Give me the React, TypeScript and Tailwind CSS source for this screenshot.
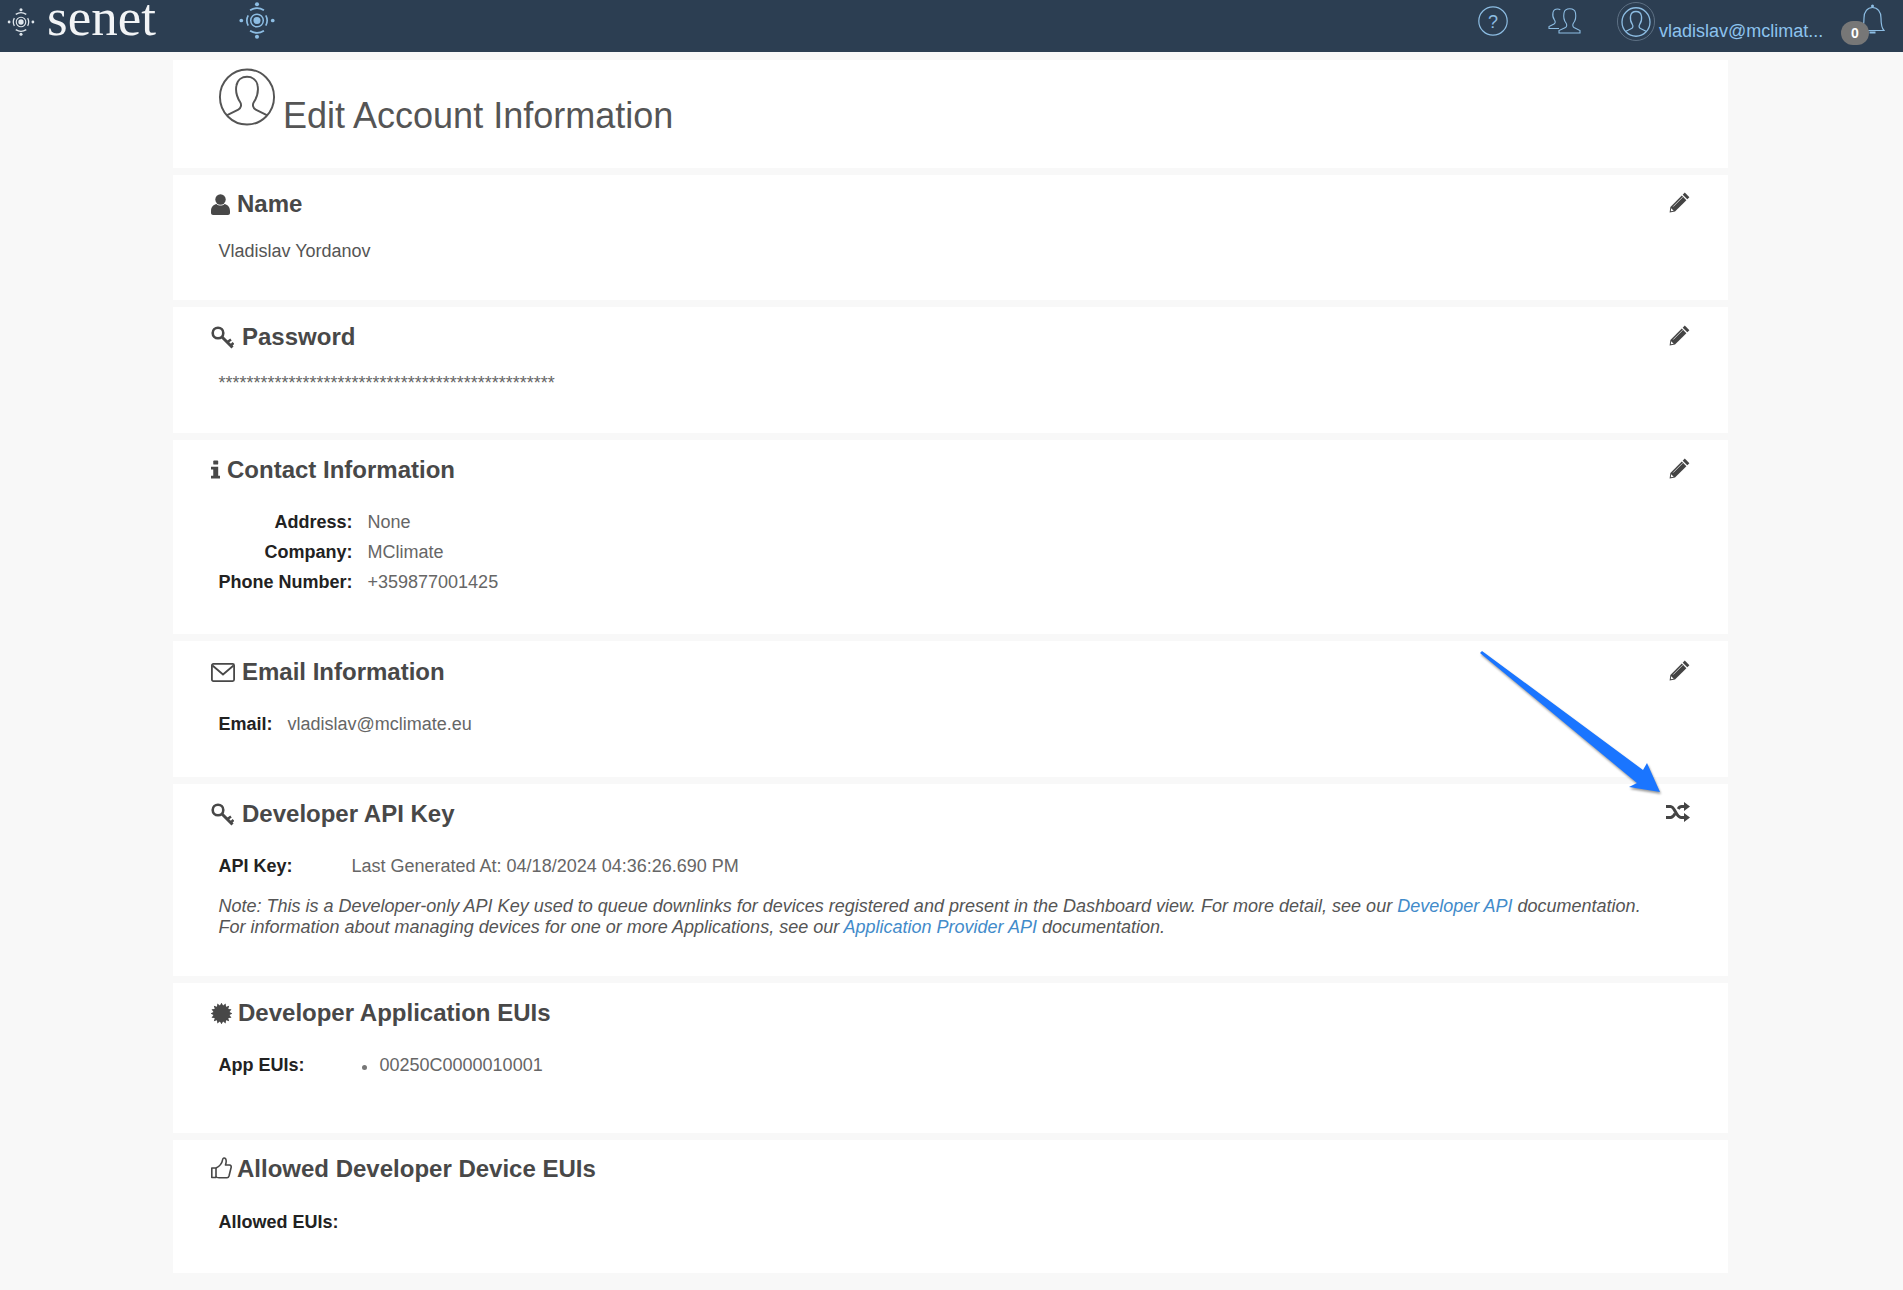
import React from "react";

const Logo = ({ className }: { className: string }) => (
  <svg viewBox="0 0 40 40" className={className} fill="none" stroke="currentColor" strokeWidth="1.8">
    <circle cx="20" cy="20" r="3.8" fill="currentColor" stroke="none" />
    <circle cx="20" cy="20" r="6.8" strokeWidth="1.6" />
    <path d="M10.5 14.5 A11.500 11.500 0 0 0 10.5 25.500 M29.5 14.5 A11.500 11.500 0 0 1 29.5 25.500" />
    <path d="M12.500 9 A14 14 0 0 1 27.500 9 M12.500 31 A14 14 0 0 0 27.500 31" strokeWidth="2" />
    <circle cx="20" cy="2.500" r="2.200" fill="currentColor" stroke="none" />
    <circle cx="20" cy="37.500" r="2.200" fill="currentColor" stroke="none" />
    <circle cx="3" cy="20" r="2" fill="currentColor" stroke="none" />
    <circle cx="37" cy="20" r="2" fill="currentColor" stroke="none" />
  </svg>
);

const silhouette =
  "M9 49 L21 43 C24 41.500 24.500 38 23 35.500 C19.500 30 18 24 19 18.500 C20 12 25 9 30 9 C35 9 40 12 41 18.500 C42 24 40.500 30 37 35.500 C35.500 38 36 41.500 39 43 L51 49";

const Profile = ({ className, w = 2 }: { className: string; w?: number }) => (
  <svg viewBox="0 0 60 60" className={className} fill="none" stroke="currentColor" strokeWidth={w}>
    <ellipse cx="30" cy="30" rx="28" ry="28.500" />
    <path d={silhouette} />
  </svg>
);

const Users = () => (
  <svg viewBox="0 0 33 26" className="w-[33px] h-[26px] text-[#8dbde3]" fill="none" stroke="currentColor" strokeWidth="1.1">
    <path d="M11 20.500 H1 V18.500 L6 16 C7.500 15 7.500 13.500 6.500 12 C5 10 4.500 7 5 4.500 C5.500 2 7.500 1 9.500 1 C10.500 1 11.500 1.300 12.300 1.800" />
    <path d="M11 25 H32 V22.500 L26 19.500 C24.500 18.500 24.500 16.500 25.500 15 C27.500 12.500 28 8 27.500 5 C27 2 24.500 .8 21.800 .8 C19 .8 16.500 2 16 5 C15.500 8 16 12.500 18 15 C19 16.500 19 18.500 17.500 19.500 L11 22.500 Z" />
  </svg>
);

const Bell = () => (
  <svg viewBox="0 0 25 30" className="w-[25px] h-[30px] text-[#8dbde3]" fill="none" stroke="currentColor" strokeWidth="1.2">
    <circle cx="12.500" cy="2" r="1.500" fill="currentColor" stroke="none" />
    <path d="M1 26.500 C3.500 24 4 21 4 14 C4 7.500 7.500 3.500 12.500 3.500 C17.500 3.500 21 7.500 21 14 C21 21 21.500 24 24 26.500 Z" />
    <path d="M9.500 28.500 H15.500" strokeWidth="2" />
  </svg>
);

const Pencil = () => (
  <svg viewBox="0 0 21 21" className="w-[21px] h-[21px] text-[#444]" fill="currentColor">
    <path d="M15.800 .6 L20.400 5.200 L18.300 7.300 L13.700 2.700 Z" />
    <path d="M12.800 3.600 L17.400 8.200 L6 19.600 L.6 20.400 L1.400 15 Z" />
    <path d="M2.200 16.300 L4.700 18.800 L1.700 19.300 Z" fill="#fff" />
    <path d="M4.200 14.600 L13.600 5.200" stroke="#fff" strokeWidth=".7" />
  </svg>
);

const Shuffle = () => (
  <svg viewBox="0 0 24 20" className="w-[24px] h-[20px] text-[#444]" fill="none" stroke="currentColor" strokeWidth="3">
    <path d="M0 4.500 H4.500 C9 4.500 10 15.500 15 15.500 H19" />
    <path d="M0 15.500 H4.500 C6.500 15.500 8 13.500 9.200 11.500 M12.200 7 C13 5.500 14 4.500 15.500 4.500 H19" />
    <path d="M18 0 L24 4.500 L18 9 Z M18 11 L24 15.500 L18 20 Z" fill="currentColor" stroke="none" />
  </svg>
);

const UserIcon = () => (
  <svg viewBox="0 0 19 21" className="w-[19px] h-[21px]" fill="currentColor">
    <circle cx="9.500" cy="5.500" r="5.200" />
    <path d="M0 17 C0 12.500 3 10.500 5.500 10 C7.500 12 11.500 12 13.500 10 C16 10.500 19 12.500 19 17 V19 C19 20 18 21 17 21 H2 C1 21 0 20 0 19 Z" />
  </svg>
);

const KeyIcon = () => (
  <svg viewBox="0 0 23 23" className="w-[23px] h-[23px]" fill="none" stroke="currentColor">
    <circle cx="7" cy="7" r="5.300" strokeWidth="2.600" />
    <path d="M10.500 10.500 L21.500 21.500" strokeWidth="3" />
    <path d="M16.500 16 L20 13.500 M19.800 19.500 L22.500 17" strokeWidth="2.500" />
  </svg>
);

const InfoIcon = () => (
  <svg viewBox="0 0 10 20" className="w-[9px] h-[19px] -mt-[2px]" fill="currentColor">
    <rect x="2.500" y="0" width="5.500" height="4.500" rx="1" />
    <path d="M0 7 H8 V17 H10 V20 H0 V17 H2.500 V10 H0 Z" />
  </svg>
);

const MailIcon = () => (
  <svg viewBox="0 0 24 19" className="w-[24px] h-[19px]" fill="none" stroke="currentColor" strokeWidth="1.800">
    <rect x=".9" y=".9" width="22.200" height="17.200" rx="1.500" />
    <path d="M1.500 2.500 L12 11.500 L22.500 2.500" />
  </svg>
);

const CertIcon = () => {
  const pts: string[] = [];
  for (let i = 0; i < 32; i++) {
    const r = i % 2 ? 8.2 : 10.8;
    const a = (i / 32) * Math.PI * 2;
    pts.push(`${(10.5 + r * Math.cos(a)).toFixed(2)},${(10.5 + r * Math.sin(a)).toFixed(2)}`);
  }
  return (
    <svg viewBox="0 0 21 21" className="w-[21px] h-[21px]" fill="currentColor">
      <polygon points={pts.join(" ")} />
    </svg>
  );
};

const ThumbIcon = () => (
  <svg viewBox="0 0 21 22" className="w-[21px] h-[22px] -mt-[3px]" fill="none" stroke="currentColor" strokeWidth="1.600" strokeLinejoin="round">
    <path d="M.8 11 H5 V20.500 H.8 Z" />
    <path d="M5 11 C8 9.500 11 6.500 11.500 3 C11.800 1 13 .7 14 1.200 C15.500 2 15.500 4.500 14.500 8 H18.500 C20 8 20.500 9.500 20 11 L18 19 C17.700 20 17 20.800 16 20.800 H8 C6.500 20.800 5.500 20.500 5 19.500" />
  </svg>
);

type SectionProps = {
  icon: React.ReactNode;
  iconBox: string;
  title: string;
  box: string;
  action?: React.ReactNode;
  children?: React.ReactNode;
};

const Section = ({ icon, iconBox, title, box, action, children }: SectionProps) => (
  <section className={`bg-white pl-[38px] pr-[38px] ${box}`}>
    <div className="flex items-center h-[30px] text-[#484848]">
      <span className={`flex items-center shrink-0 ${iconBox}`}>{icon}</span>
      <h2 className="text-[24px] leading-[30px] font-bold">{title}</h2>
      <span className="ml-auto -mt-[4px] flex items-center">{action}</span>
    </div>
    <div className="pl-[7.5px] text-[18px] leading-[30px] text-[#666]">{children}</div>
  </section>
);

const Label = ({ children, className = "" }: { children: React.ReactNode; className?: string }) => (
  <span className={`font-bold text-[#222] whitespace-nowrap ${className}`}>{children}</span>
);

export default function App() {
  return (
    <div className="relative min-h-[1290px] bg-[#f8f8f8] font-['Liberation_Sans',Arial,sans-serif]">
      <header className="h-[52px] bg-[#2c3e52] flex items-start">
        <Logo className="w-[28px] h-[28px] mt-[8px] ml-[7px] text-[#dfe6ec]" />
        <span className="ml-[12px] font-['Liberation_Serif',serif] text-[53px] leading-[34px] text-[#f2f4f6]">senet</span>
        <Logo className="w-[38px] h-[37px] mt-[2px] ml-[82px] text-[#8dbde3]" />
        <div className="ml-auto flex items-start">
          <svg viewBox="0 0 30 30" className="w-[30px] h-[30px] mt-[6px] text-[#8dbde3]" fill="none" stroke="currentColor" strokeWidth="1.200">
            <circle cx="15" cy="15" r="14.200" />
            <text x="15" y="21.500" textAnchor="middle" fill="currentColor" stroke="none" fontSize="18" fontFamily="Liberation Sans">?</text>
          </svg>
          <div className="mt-[8px] ml-[40px]"><Users /></div>
          <div className="ml-[36px] mt-[2px] w-[38px] h-[39px] rounded-full border border-[#5d7084] flex items-center justify-center">
            <Profile className="w-[30px] h-[30px] text-[#8dbde3]" w={2.600} />
          </div>
          <span className="ml-[4px] mt-[21px] w-[164px] text-[18px] leading-[21px] text-[#8dc3ee] whitespace-nowrap">vladislav@mclimat...</span>
          <div className="relative ml-[37px] mr-[18px] mt-[4px]">
            <Bell />
            <span className="absolute left-[-19px] top-[17px] w-[28px] h-[24px] rounded-[12px] bg-[#777] text-white text-[14px] leading-[24px] font-bold text-center">0</span>
          </div>
        </div>
      </header>

      <main className="ml-[173px] w-[1555px] pt-[8px] pb-[17px] flex flex-col gap-[7px]">
        <section className="bg-white h-[108px] pl-[45px] pt-[8px] flex items-start">
          <Profile className="w-[58px] h-[58px] text-[#555]" w={2} />
          <h1 className="ml-[7px] mt-[28px] text-[36px] leading-[40px] font-normal text-[#555] whitespace-nowrap">Edit Account Information</h1>
        </section>

        <Section box="h-[125px] pt-[14px]" iconBox="w-[26px]" icon={<UserIcon />} title="Name" action={<Pencil />}>
          <p className="mt-[17px] text-[#555]">Vladislav Yordanov</p>
        </Section>

        <Section box="h-[126px] pt-[15px]" iconBox="w-[31px]" icon={<KeyIcon />} title="Password" action={<Pencil />}>
          <p className="mt-[16px]">{"*".repeat(48)}</p>
        </Section>

        <Section box="h-[194px] pt-[15px]" iconBox="w-[16px]" icon={<InfoIcon />} title="Contact Information" action={<Pencil />}>
          <div className="mt-[22px] grid grid-cols-[134px_1fr] gap-x-[15px]">
            <Label className="text-right">Address:</Label><span>None</span>
            <Label className="text-right">Company:</Label><span>MClimate</span>
            <Label className="text-right">Phone Number:</Label><span>+359877001425</span>
          </div>
        </Section>

        <Section box="h-[136px] pt-[16px]" iconBox="w-[31px]" icon={<MailIcon />} title="Email Information" action={<Pencil />}>
          <div className="mt-[22px] flex">
            <Label className="w-[69px]">Email:</Label><span>vladislav@mclimate.eu</span>
          </div>
        </Section>

        <Section box="h-[192px] pt-[15px]" iconBox="w-[31px]" icon={<KeyIcon />} title="Developer API Key" action={<Shuffle />}>
          <div className="mt-[22px] flex">
            <Label className="w-[133px]">API Key:</Label><span>Last Generated At: 04/18/2024 04:36:26.690 PM</span>
          </div>
          <p className="mt-[15px] text-[18px] leading-[21px] italic text-[#555] whitespace-nowrap">
            Note: This is a Developer-only API Key used to queue downlinks for devices registered and present in the Dashboard view. For more detail, see our <a className="text-[#428bca]">Developer API</a> documentation.
            <br />
            For information about managing devices for one or more Applications, see our <a className="text-[#428bca]">Application Provider API</a> documentation.
          </p>
        </Section>

        <Section box="h-[150px] pt-[15px]" iconBox="w-[27px]" icon={<CertIcon />} title="Developer Application EUIs">
          <div className="mt-[22px] flex">
            <Label className="w-[143px]">App EUIs:</Label>
            <span className="mt-[15px] w-[5px] h-[5px] rounded-full bg-[#777]" />
            <span className="ml-[13px]">00250C0000010001</span>
          </div>
        </Section>

        <Section box="h-[133px] pt-[14px]" iconBox="w-[26px]" icon={<ThumbIcon />} title="Allowed Developer Device EUIs">
          <div className="mt-[23px]"><Label>Allowed EUIs:</Label></div>
        </Section>
      </main>

      <svg viewBox="0 0 190 150" className="absolute left-[1476px] top-[648px] w-[190px] h-[150px] drop-shadow-[1px_2px_1px_rgba(0,0,0,0.4)]">
        <polygon points="4,5 6,3 167,122 171,115 184,144 153,139 161,135" fill="#1a75ff" />
      </svg>
    </div>
  );
}
